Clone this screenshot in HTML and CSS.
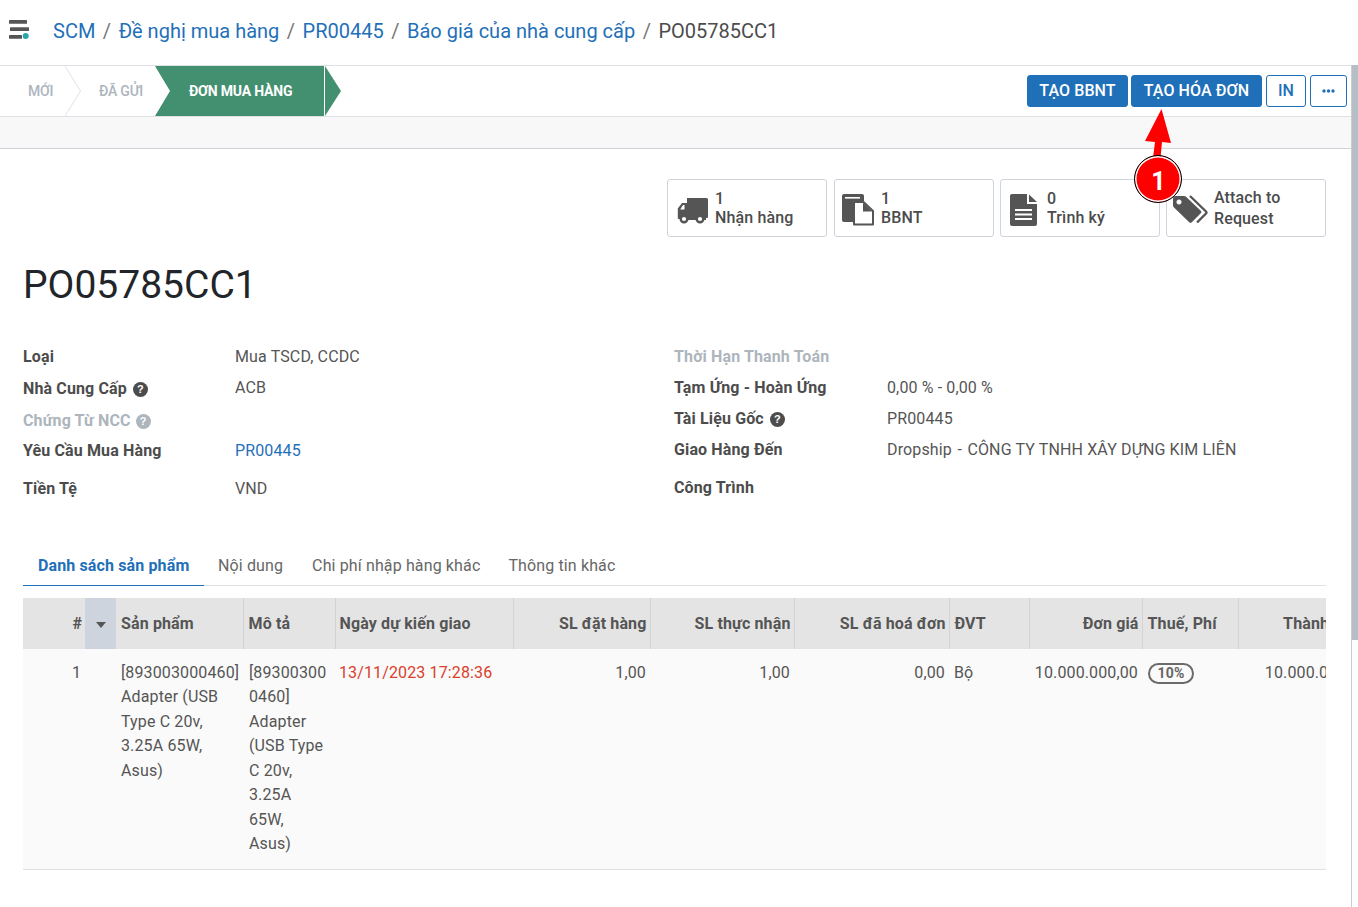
FILE: index.html
```html
<!DOCTYPE html>
<html lang="vi">
<head>
<meta charset="utf-8">
<title>PO05785CC1</title>
<link rel="stylesheet" href="styles.css">
</head>
<body>
<div class="page">
<main class="main">
  <header class="topbar">
    <svg class="menu-icon" width="22" height="22" viewBox="0 0 22 22"><rect x="1" y="1" width="18" height="3.700" rx=".5" fill="#555"/><rect x="2" y="8.300" width="19" height="3.700" rx=".5" fill="#555"/><rect x="1" y="16" width="13" height="3.700" rx=".5" fill="#555"/><circle cx="17.700" cy="17" r="3" fill="#2ba3a8"/></svg>
    <nav class="crumbs">
      <a>SCM</a><span class="sep">/</span><a>Đề nghị mua hàng</a><span class="sep">/</span><a>PR00445</a><span class="sep">/</span><a>Báo giá của nhà cung cấp</a><span class="sep">/</span><span class="current">PO05785CC1</span>
    </nav>
  </header>
  <section class="statusbar">
    <div class="steps">
      <div class="step step-new">MỚI<svg class="chev" width="17" height="50" viewBox="0 0 17 50"><path d="M0 0 15.5 25 0 50" fill="none" stroke="#dee2e6"/></svg></div>
      <div class="step step-sent">ĐÃ GỬI</div>
      <div class="step step-active">ĐƠN MUA HÀNG</div>
      <svg class="step-tip" width="17" height="50" viewBox="0 0 17 50"><path d="M0 0 16 25 0 50z" fill="#439070"/></svg>
    </div>
    <div class="actions">
      <button class="btn btn-primary btn-bbnt">TẠO BBNT</button>
      <button class="btn btn-primary btn-invoice">TẠO HÓA ĐƠN</button>
      <button class="btn btn-outline btn-in">IN</button>
      <button class="btn btn-outline btn-more"><svg width="13" height="4" viewBox="0 0 13 4"><circle cx="2" cy="2" r="1.7" fill="#1f70b8"/><circle cx="6.5" cy="2" r="1.7" fill="#1f70b8"/><circle cx="11" cy="2" r="1.7" fill="#1f70b8"/></svg></button>
    </div>
  </section>
  <div class="band"></div>
  <section class="sheet">
    <div class="smart-buttons">
      <div class="smart">
        <svg class="smart-icon icon-truck" width="31" height="26" viewBox="0 0 31 26"><path fill="#555" d="M10 0h19.500A1.500 1.500 0 0 1 31 1.500V19a1 1 0 0 1-1 1H10z"/><path fill="#555" fill-rule="evenodd" d="M9 5H5L.8 10.500V20a1 1 0 0 0 1 1H10V5zM7.500 7v4.500H3.200L6 7z"/><rect x="9" y="20" width="20" height="2" fill="#555"/><circle cx="7" cy="21" r="3.300" fill="#fff" stroke="#555" stroke-width="2.400"/><circle cx="23" cy="21" r="3.300" fill="#fff" stroke="#555" stroke-width="2.400"/></svg>
        <div class="smart-text"><b>1</b><span>Nhận hàng</span></div>
      </div>
      <div class="smart">
        <svg class="smart-icon icon-files" width="32" height="32" viewBox="0 0 32 32"><path fill="#555" d="M2 0h18a2 2 0 0 1 2 2v5h-9a2 2 0 0 0-2 2v19H2a2 2 0 0 1-2-2V2a2 2 0 0 1 2-2z"/><rect x="3" y="3" width="15" height="1.600" fill="#fff"/><path fill="#fff" stroke="#555" stroke-width="2" stroke-linejoin="round" d="M12 8h9.500L31 17v13.500H12z"/><path fill="#555" d="M21 8.500v9h9z"/></svg>
        <div class="smart-text"><b>1</b><span>BBNT</span></div>
      </div>
      <div class="smart">
        <svg class="smart-icon icon-doc" width="27" height="32" viewBox="0 0 27 32"><path fill="#555" d="M2 0h15v10h10v20a2 2 0 0 1-2 2H2a2 2 0 0 1-2-2V2a2 2 0 0 1 2-2z"/><path fill="#555" d="M19 0.500 27 8h-8z"/><path stroke="#fff" stroke-width="2" d="M5 16h17M5 20.500h17M5 25h17"/></svg>
        <div class="smart-text"><b>0</b><span>Trình ký</span></div>
      </div>
      <div class="smart">
        <svg class="smart-icon icon-tag" width="35" height="28" viewBox="0 0 35 28"><path fill="#555" fill-rule="evenodd" d="M3 1h8a3 3 0 0 1 2 .8L27.500 15.500a2 2 0 0 1 0 3L19 27a2 2 0 0 1-3 0L1 12.500a3 3 0 0 1-1-2V4a3 3 0 0 1 3-3zM6 4.500a2.500 2.500 0 1 0 .01 0z"/><path fill="none" stroke="#555" stroke-width="2.400" d="M17 1 33 16.500a1.500 1.500 0 0 1 0 2L24 27.500"/></svg>
        <div class="smart-text normal"><span>Attach to</span><span>Request</span></div>
      </div>
    </div>
    <h1 class="title">PO05785CC1</h1>
    <div class="fields">
      <div class="field-col">
        <div class="field r32"><label>Loại</label><span>Mua TSCD, CCDC</span></div>
        <div class="field r32"><label>Nhà Cung Cấp <i class="help">?</i></label><span class="nudge">ACB</span></div>
        <div class="field r30"><label class="muted">Chứng Từ NCC <i class="help help-muted">?</i></label><span></span></div>
        <div class="field r38"><label>Yêu Cầu Mua Hàng</label><span class="link">PR00445</span></div>
        <div class="field r32"><label>Tiền Tệ</label><span>VND</span></div>
      </div>
      <div class="field-col">
        <div class="field r31"><label class="muted">Thời Hạn Thanh Toán</label><span></span></div>
        <div class="field r31"><label>Tạm Ứng - Hoàn Ứng</label><span>0,00 % - 0,00 %</span></div>
        <div class="field r31"><label>Tài Liệu Gốc <i class="help">?</i></label><span>PR00445</span></div>
        <div class="field r38"><label>Giao Hàng Đến</label><span>Dropship<span class="dash">-</span>CÔNG TY TNHH XÂY DỰNG KIM LIÊN</span></div>
        <div class="field r32"><label>Công Trình</label><span></span></div>
      </div>
    </div>
    <div class="tabs">
      <a class="tab tab-active">Danh sách sản phẩm</a>
      <a class="tab tab-content">Nội dung</a>
      <a class="tab">Chi phí nhập hàng khác</a>
      <a class="tab">Thông tin khác</a>
    </div>
    <div class="table-wrap">
      <table class="lines">
        <colgroup>
          <col class="c-num"><col class="c-sort"><col class="c-prod"><col class="c-desc"><col class="c-date"><col class="c-qty1"><col class="c-qty2"><col class="c-qty3"><col class="c-uom"><col class="c-price"><col class="c-tax"><col class="c-total">
        </colgroup>
        <thead>
          <tr>
            <th class="right">#</th>
            <th class="sort"><span class="caret"></span></th>
            <th>Sản phẩm</th>
            <th>Mô tả</th>
            <th class="date-head">Ngày dự kiến giao</th>
            <th class="right">SL đặt hàng</th>
            <th class="right">SL thực nhận</th>
            <th class="right">SL đã hoá đơn</th>
            <th>ĐVT</th>
            <th class="right">Đơn giá</th>
            <th>Thuế, Phí</th>
            <th class="right total-head">Thành tiền</th>
          </tr>
        </thead>
        <tbody>
          <tr>
            <td class="right">1</td>
            <td></td>
            <td>[893003000460] Adapter (USB Type C 20v, 3.25A 65W, Asus)</td>
            <td class="wrap">[893003000460] Adapter (USB Type C 20v, 3.25A 65W, Asus)</td>
            <td class="late">13/11/2023 17:28:36</td>
            <td class="right">1,00</td>
            <td class="right">1,00</td>
            <td class="right">0,00</td>
            <td>Bộ</td>
            <td class="right">10.000.000,00</td>
            <td><span class="pill">10%</span></td>
            <td class="right">10.000.000,00</td>
          </tr>
        </tbody>
      </table>
    </div>
  </section>
</main>
<div class="scrollbar"><div class="thumb"></div></div>
</div>
<svg class="annot-arrow" width="50" height="60" viewBox="0 0 50 60"><path d="M28.500 1 38 35 29 34 27.500 50 20 50 22 34 12 33z" fill="#f00"/></svg>
<div class="annot-badge">1</div>
</body>
</html>
```

FILE: styles.css
```css
* { box-sizing: border-box; }
html, body { margin: 0; height: 100%; overflow: hidden; }
body { font-family: Roboto, "Liberation Sans", sans-serif; font-size: 16px; letter-spacing: .13px; color: #4c4c4c; background: #fff; position: relative; }
.page { display: flex; height: 907px; }
.main { flex: 1; min-width: 0; }
.scrollbar { width: 7px; background: #fff; margin-top: 65px; border-left: 1px solid #ccc; }
.thumb { height: 575px; background: #b4bfc7; }

.topbar { height: 66px; display: flex; align-items: center; padding: 0 0 4px 8px; border-bottom: 1px solid #dee2e6; margin-right: -7px; }
.menu-icon { margin-right: 23px; margin-top: -1px; }
.crumbs { font-size: 20px; letter-spacing: 0; display: flex; }
.crumbs a { color: #1f70b8; }
.crumbs .sep { color: #777; margin: 0 7.500px; }
.crumbs .current { color: #4c4c4c; }

.statusbar { height: 51px; display: flex; justify-content: space-between; align-items: center; border-bottom: 1px solid #dee2e6; padding-right: 4px; }
.steps { display: flex; height: 50px; align-items: stretch; }
.step { display: flex; align-items: center; font-size: 14px; font-weight: 500; color: #adb5bd; letter-spacing: -.2px; position: relative; }
.step-new { width: 65px; padding-left: 28px; }
.chev { position: absolute; left: 65px; top: 0; }
.step-sent { width: 90px; padding-left: 34px; }
.step-active { width: 169px; padding-left: 34px; color: #fff; font-weight: 700; letter-spacing: -.18px; background: #439070; clip-path: polygon(0 0, 100% 0, 100% 100%, 0 100%, 15px 50%); }
.step-tip { margin-left: 1px; }
.actions { display: flex; gap: 4px; margin-top: -1px; }
.btn { height: 32px; border-radius: 3px; font: 500 16px Roboto, sans-serif; letter-spacing: .1px; padding: 0; }
.btn-primary { background: #1f70b8; border: 1px solid #1f70b8; color: #fff; }
.btn-outline { background: #fff; border: 1px solid #1f70b8; color: #1f70b8; display: flex; align-items: center; justify-content: center; }
.btn-bbnt { width: 101px; margin-right: -1px; }
.btn-invoice { width: 131px; }
.btn-in { width: 40px; }
.btn-more { width: 37px; }
.band { height: 32px; background: #f8f8f8; border-bottom: 1px solid #ced4da; }

.sheet { padding: 30px 25px 0 23px; }
.smart-buttons { display: flex; justify-content: flex-end; gap: 6px; height: 58px; }
.smart { width: 160px; height: 58px; border: 1px solid #ced4da; border-radius: 3px; display: flex; align-items: center; position: relative; padding-left: 46px; }
.smart:first-child { margin-right: 1px; padding-left: 47px; }
.smart:last-child { padding-left: 47px; }
.smart-icon { position: absolute; left: 9px; top: 50%; transform: translateY(-50%); }
.icon-truck { top: 18px; transform: none; }
.icon-files { left: 7px; top: 14px; transform: none; }
.icon-doc { top: 14px; transform: none; }
.icon-tag { left: 6px; top: 15px; transform: none; }
.smart-text { display: flex; flex-direction: column; line-height: 19px; color: #4c4c4c; font-weight: 500; }
.smart-text b { font-weight: 500; }
.smart-text.normal { line-height: 21px; }
.title { font-size: 39px; font-weight: 400; letter-spacing: 0; color: #212529; margin: 25px 0 0; line-height: 47px; }

.fields { display: grid; grid-template-columns: 651px 1fr; margin-top: 38px; }
.field { display: flex; align-items: flex-start; line-height: 20px; }
.r31 { height: 31px; }
.r30 { height: 30px; }
.r32 { height: 32px; }
.r38 { height: 38px; }
.field label { width: 212px; font-weight: 700; color: #4c4c4c; flex: none; }
.field-col + .field-col label { width: 213px; }
.field label.muted { color: #adb5bd; }
.field span { color: #555; }
.field .link { color: #1f70b8; }
.field .nudge { margin-top: -1px; }
.field .dash { margin: 0 5.500px; }
.help { display: inline-block; width: 15px; height: 15px; border-radius: 50%; background: #4c4c4c; color: #fff; font: 700 11px/15px "Liberation Sans", sans-serif; text-align: center; margin-left: 2px; vertical-align: 1px; }
.help-muted { background: #adb5bd; margin-left: 1px; }

.tabs { display: flex; height: 40px; margin-top: 35px; border-bottom: 1px solid #dee2e6; }
.tab { padding: 0 15px; line-height: 40px; color: #666; }
.tab + .tab { padding: 0 14px; }
.tab + .tab-content { padding: 0 15px 0 14px; }
.tab-active { color: #1f70b8; font-weight: 700; border-bottom: 1px solid #1f70b8; height: 40px; width: 181px; white-space: nowrap; }
.table-wrap { margin-top: 12px; width: 1303px; overflow: hidden; }
.lines { table-layout: fixed; border-collapse: collapse; width: 1349px; }
.c-num { width: 62px; } .c-sort { width: 31px; } .c-prod { width: 127px; } .c-desc { width: 92px; } .c-date { width: 178px; }
.c-qty1 { width: 137px; } .c-qty2 { width: 144px; } .c-qty3 { width: 155px; } .c-uom { width: 80px; } .c-price { width: 113px; } .c-tax { width: 96px; } .c-total { width: 134px; }
.lines th { height: 51px; background: #e4e4e4; color: #555; font-weight: 700; text-align: left; padding: 0 3px 0 5px; border-left: 1px solid #ced4da; white-space: nowrap; }
.lines th:first-child, .lines th.sort, .lines th.sort + th { border-left: 0; }
.lines th.date-head { padding-left: 4px; }
.lines th.right { text-align: right; }
.lines th.total-head { padding-right: 11px; }
.lines th.sort { background: #ced4de; text-align: center; padding: 0; }
.caret { display: inline-block; border: 5px solid transparent; border-top: 6px solid #555; border-bottom: 0; vertical-align: middle; }
.lines td { vertical-align: top; background: #fafafa; padding: 11.750px 4px 12.250px 5px; line-height: 24.500px; color: #555; border-bottom: 1px solid #dee2e6; }
.lines td.right { text-align: right; }
.lines td.wrap { overflow-wrap: anywhere; padding-left: 6px; padding-right: 8px; }
.lines td.late { color: #d9402b; padding-left: 4px; white-space: nowrap; }
.pill { display: inline-block; border: 2px solid #6a6a6a; border-radius: 11px; font-size: 14px; font-weight: 700; color: #666; line-height: 17px; padding: 0 7px; width: 46px; text-align: center; margin-left: 1px; }

.annot-arrow { position: absolute; left: 1133px; top: 108px; }
.annot-badge { position: absolute; left: 1134px; top: 155px; width: 48px; height: 48px; border-radius: 50%; background: #f00; border: 1px solid #000; box-shadow: inset 0 0 0 1.500px #fff; color: #fff; font: 700 25px/51px Roboto, sans-serif; padding-left: 1px; text-align: center; }
```
